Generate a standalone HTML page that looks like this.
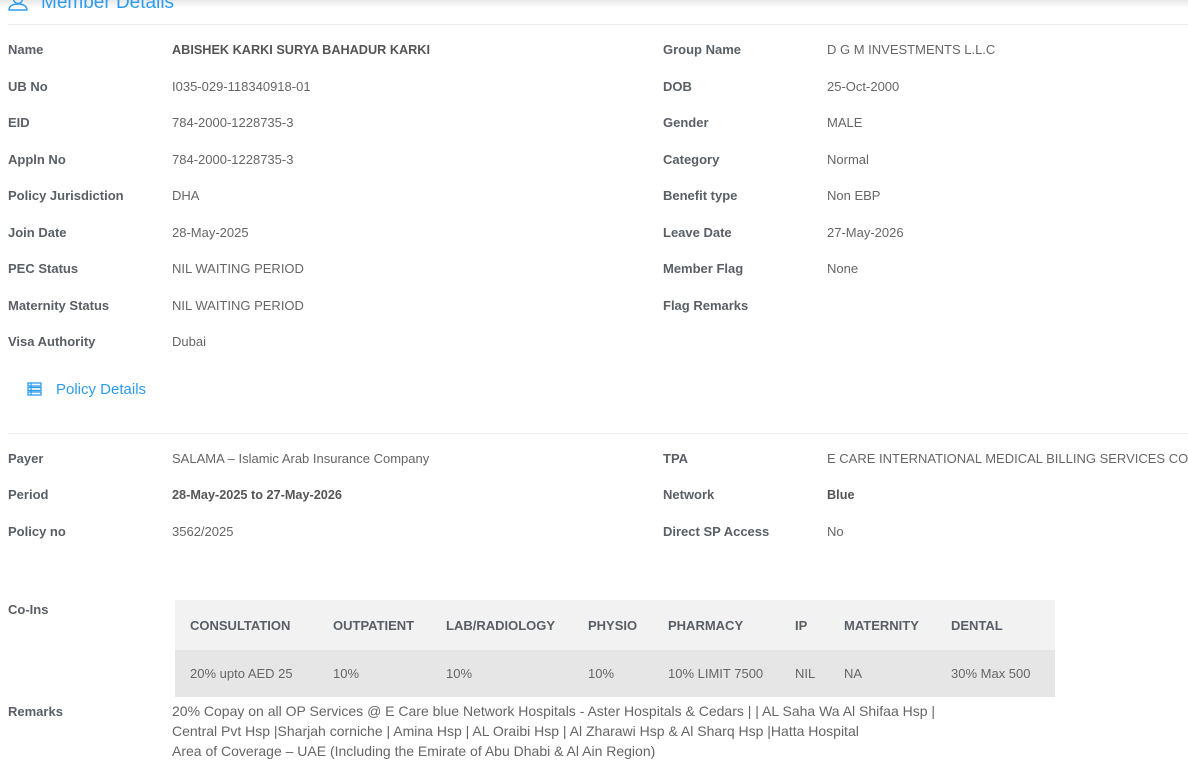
<!DOCTYPE html>
<html><head><meta charset="utf-8"><style>
*{margin:0;padding:0;box-sizing:border-box}
body{width:1188px;height:749px;overflow:hidden;background:#fff;font-family:"Liberation Sans",sans-serif;font-size:13px;color:#666;position:relative}
.a{position:absolute;white-space:nowrap;line-height:16px}
.l{font-weight:bold;color:#5a5f66}
.b{font-weight:bold;color:#555;font-size:12.7px}
.hd{color:#2d9cef}
.ln{position:absolute;left:8px;right:0;height:1px;background:#ececec}
table{position:absolute;left:175px;top:600px;width:880px;border-collapse:collapse}
th,td{text-align:left;padding:0 0 0 15px;white-space:nowrap;font-size:13px}
th{background:#f2f2f2;height:50px;font-weight:bold;color:#5a5f66}
td{background:#e6e6e6;height:47px;color:#666}
</style></head><body>
<div style="position:absolute;left:0;top:0;width:1188px;height:8px;background:linear-gradient(#e8e8e8,#fff)"></div>
<svg class="a" style="left:8px;top:-6px" width="20" height="18" viewBox="0 0 20 18" fill="none" stroke="#2d9cef" stroke-width="1.4"><circle cx="10" cy="5" r="4.5"/><path d="M1 16c0-4 4-6 9-6s9 2 9 6z"/></svg>
<div class="a hd" style="left:41px;top:-8px;font-size:19px;line-height:22px">Member Details</div>
<div class="ln" style="top:24px"></div>

<div class="a l" style="left:8px;top:42px">Name</div><div class="a b" style="left:172px;top:42px">ABISHEK KARKI SURYA BAHADUR KARKI</div>
<div class="a l" style="left:663px;top:42px">Group Name</div><div class="a" style="left:827px;top:42px">D G M INVESTMENTS L.L.C</div>
<div class="a l" style="left:8px;top:79px">UB No</div><div class="a" style="left:172px;top:79px">I035-029-118340918-01</div>
<div class="a l" style="left:663px;top:79px">DOB</div><div class="a" style="left:827px;top:79px">25-Oct-2000</div>
<div class="a l" style="left:8px;top:115px">EID</div><div class="a" style="left:172px;top:115px">784-2000-1228735-3</div>
<div class="a l" style="left:663px;top:115px">Gender</div><div class="a" style="left:827px;top:115px">MALE</div>
<div class="a l" style="left:8px;top:152px">Appln No</div><div class="a" style="left:172px;top:152px">784-2000-1228735-3</div>
<div class="a l" style="left:663px;top:152px">Category</div><div class="a" style="left:827px;top:152px">Normal</div>
<div class="a l" style="left:8px;top:188px">Policy Jurisdiction</div><div class="a" style="left:172px;top:188px">DHA</div>
<div class="a l" style="left:663px;top:188px">Benefit type</div><div class="a" style="left:827px;top:188px">Non EBP</div>
<div class="a l" style="left:8px;top:225px">Join Date</div><div class="a" style="left:172px;top:225px">28-May-2025</div>
<div class="a l" style="left:663px;top:225px">Leave Date</div><div class="a" style="left:827px;top:225px">27-May-2026</div>
<div class="a l" style="left:8px;top:261px">PEC Status</div><div class="a" style="left:172px;top:261px">NIL WAITING PERIOD</div>
<div class="a l" style="left:663px;top:261px">Member Flag</div><div class="a" style="left:827px;top:261px">None</div>
<div class="a l" style="left:8px;top:298px">Maternity Status</div><div class="a" style="left:172px;top:298px">NIL WAITING PERIOD</div>
<div class="a l" style="left:663px;top:298px">Flag Remarks</div>
<div class="a l" style="left:8px;top:334px">Visa Authority</div><div class="a" style="left:172px;top:334px">Dubai</div>

<svg class="a" style="left:27px;top:382px" width="15" height="14" viewBox="0 0 15 14" fill="none" stroke="#2d9cef" stroke-width="1.3"><rect x="1" y="1" width="13" height="3"/><rect x="1" y="5.5" width="13" height="3"/><rect x="1" y="10" width="13" height="3"/><path d="M4 1v12"/></svg>
<div class="a hd" style="left:56px;top:381px;font-size:15px;line-height:18px">Policy Details</div>
<div class="ln" style="top:433px"></div>

<div class="a l" style="left:8px;top:451px">Payer</div><div class="a" style="left:172px;top:451px">SALAMA – Islamic Arab Insurance Company</div>
<div class="a l" style="left:663px;top:451px">TPA</div><div class="a" style="left:827px;top:451px">E CARE INTERNATIONAL MEDICAL BILLING SERVICES CO. LLC</div>
<div class="a l" style="left:8px;top:487px">Period</div><div class="a b" style="left:172px;top:487px">28-May-2025 to 27-May-2026</div>
<div class="a l" style="left:663px;top:487px">Network</div><div class="a b" style="left:827px;top:487px">Blue</div>
<div class="a l" style="left:8px;top:524px">Policy no</div><div class="a" style="left:172px;top:524px">3562/2025</div>
<div class="a l" style="left:663px;top:524px">Direct SP Access</div><div class="a" style="left:827px;top:524px">No</div>

<div class="a l" style="left:8px;top:602px">Co-Ins</div>
<table>
<tr><th style="width:143px">CONSULTATION</th><th style="width:113px">OUTPATIENT</th><th style="width:142px">LAB/RADIOLOGY</th><th style="width:80px">PHYSIO</th><th style="width:127px">PHARMACY</th><th style="width:49px">IP</th><th style="width:107px">MATERNITY</th><th>DENTAL</th></tr>
<tr><td>20% upto AED 25</td><td>10%</td><td>10%</td><td>10%</td><td>10% LIMIT 7500</td><td>NIL</td><td>NA</td><td>30% Max 500</td></tr>
</table>

<div class="a l" style="left:8px;top:704px">Remarks</div>
<div class="a" style="left:172px;top:701px;line-height:20px;font-size:14px">20% Copay on all OP Services @ E Care blue Network Hospitals - Aster Hospitals &amp; Cedars | | AL Saha Wa Al Shifaa Hsp |<br>Central Pvt Hsp |Sharjah corniche | Amina Hsp | AL Oraibi Hsp | Al Zharawi Hsp &amp; Al Sharq Hsp |Hatta Hospital<br>Area of Coverage – UAE (Including the Emirate of Abu Dhabi &amp; Al Ain Region)</div>
</body></html>
